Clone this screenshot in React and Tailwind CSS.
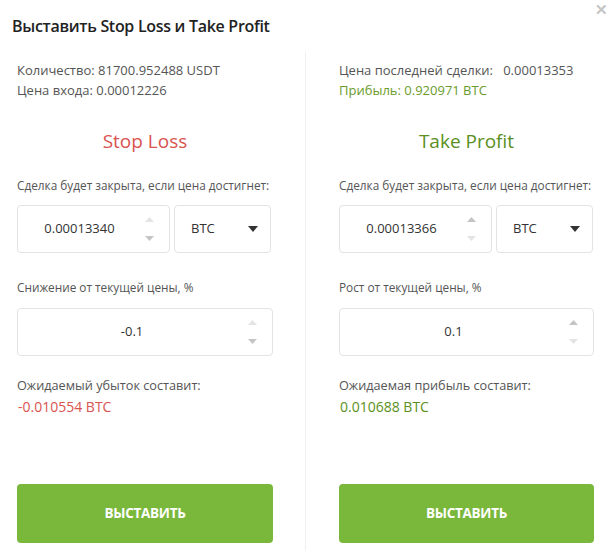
import React from "react";

const Spinner = ({ upDark }) => (
  <div className="flex flex-col items-center justify-center gap-[14px] w-[20px]">
    <svg width="9" height="5" viewBox="0 0 9 5">
      <path d="M0 5 L4.5 0 L9 5 Z" fill={upDark ? "#c4c4c4" : "#e4e4e4"} />
    </svg>
    <svg width="9" height="5" viewBox="0 0 9 5">
      <path d="M0 0 L4.5 5 L9 0 Z" fill={upDark ? "#e4e4e4" : "#c4c4c4"} />
    </svg>
  </div>
);

const Caret = () => (
  <svg width="10" height="6" viewBox="0 0 10 6">
    <path d="M0 0 L5 6 L10 0 Z" fill="#333" />
  </svg>
);

const Column = ({ side }) => {
  const stop = side === "stop";
  return (
    <div className={`flex flex-col ${stop ? "w-[256px]" : "w-[255px]"}`}>
      {stop ? (
        <>
          <div className="h-[20px] leading-[20px] text-[13px] text-[#555]">
            Количество: 81700.952488 USDT
          </div>
          <div className="h-[20px] leading-[20px] text-[13px] text-[#555]">
            Цена входа: 0.00012226
          </div>
        </>
      ) : (
        <>
          <div className="h-[20px] leading-[20px] text-[13px] text-[#555]">
            Цена последней сделки:&nbsp;&nbsp; 0.00013353
          </div>
          <div className="h-[20px] leading-[20px] text-[13px] text-[#6a9c2c]">
            Прибыль: 0.920971 BTC
          </div>
        </>
      )}

      <div
        className={`mt-[27px] h-[28px] leading-[28px] text-center text-[19px] ${
          stop ? "text-[#d9534f]" : "text-[#5b8f22]"
        }`}
      >
        {stop ? "Stop Loss" : "Take Profit"}
      </div>

      <div className="mt-[20px] h-[20px] leading-[20px] text-[11.8px] text-[#555] whitespace-nowrap">
        Сделка будет закрыта, если цена достигнет:
      </div>

      <div className="mt-[10px] flex gap-[4px]">
        <div className="w-[153px] h-[48px] flex items-center border border-[#e3e3e3] rounded-[4px] bg-white">
          <div className="flex-1 text-center text-[13px] text-[#333] pl-[2px]">
            {stop ? "0.00013340" : "0.00013366"}
          </div>
          <div className="pr-[10px]">
            <Spinner upDark={!stop} />
          </div>
        </div>
        <div className="w-[97px] h-[48px] flex items-center justify-between border border-[#e3e3e3] rounded-[4px] bg-white pl-[16px] pr-[12px]">
          <span className="text-[13px] text-[#333]">BTC</span>
          <Caret />
        </div>
      </div>

      <div className="mt-[24px] h-[20px] leading-[20px] text-[11.8px] text-[#555] whitespace-nowrap">
        {stop ? "Снижение от текущей цены, %" : "Рост от текущей цены, %"}
      </div>

      <div className="mt-[11px] h-[48px] flex items-center border border-[#e3e3e3] rounded-[4px] bg-white">
        <div className="flex-1 text-center text-[13px] text-[#333] pl-[4px]">
          {stop ? "-0.1" : "0.1"}
        </div>
        <div className="pr-[10px]">
          <Spinner upDark={!stop} />
        </div>
      </div>

      <div className="mt-[19px] h-[20px] leading-[20px] text-[12.7px] text-[#555]">
        {stop ? "Ожидаемый убыток составит:" : "Ожидаемая прибыль составит:"}
      </div>
      <div
        className={`mt-[2px] h-[20px] leading-[20px] text-[14px] pl-[1px] ${
          stop ? "text-[#d9534f]" : "text-[#5b8f22]"
        }`}
      >
        {stop ? "-0.010554 BTC" : "0.010688 BTC"}
      </div>

      <button className="mt-[67px] h-[59px] rounded-[4px] bg-[#7ab83c] text-white text-[13.5px] font-bold tracking-[-0.3px]">
        ВЫСТАВИТЬ
      </button>
    </div>
  );
};

export default function App() {
  return (
    <div
      className="w-[615px] h-[551px] bg-white relative overflow-hidden"
      style={{ fontFamily: '"Open Sans", "Noto Sans", sans-serif' }}
    >
      <div className="h-[52px] flex items-center pl-[12px]">
        <h1 className="text-[16px] font-semibold text-[#222] tracking-[-0.3px]">
          Выставить Stop Loss и Take Profit
        </h1>
      </div>
      <button className="absolute top-[2px] right-[7px] text-[#c4c4c4] text-[15px] font-bold leading-none">
        ✕
      </button>

      <div className="flex">
        <div className="w-[306px] shrink-0 pl-[17px] pt-[8px] pb-[8px] border-r border-[#f0f0f0]">
          <Column side="stop" />
        </div>
        <div className="w-[309px] shrink-0 pl-[33px] pt-[8px] pb-[8px]">
          <Column side="take" />
        </div>
      </div>
    </div>
  );
}
